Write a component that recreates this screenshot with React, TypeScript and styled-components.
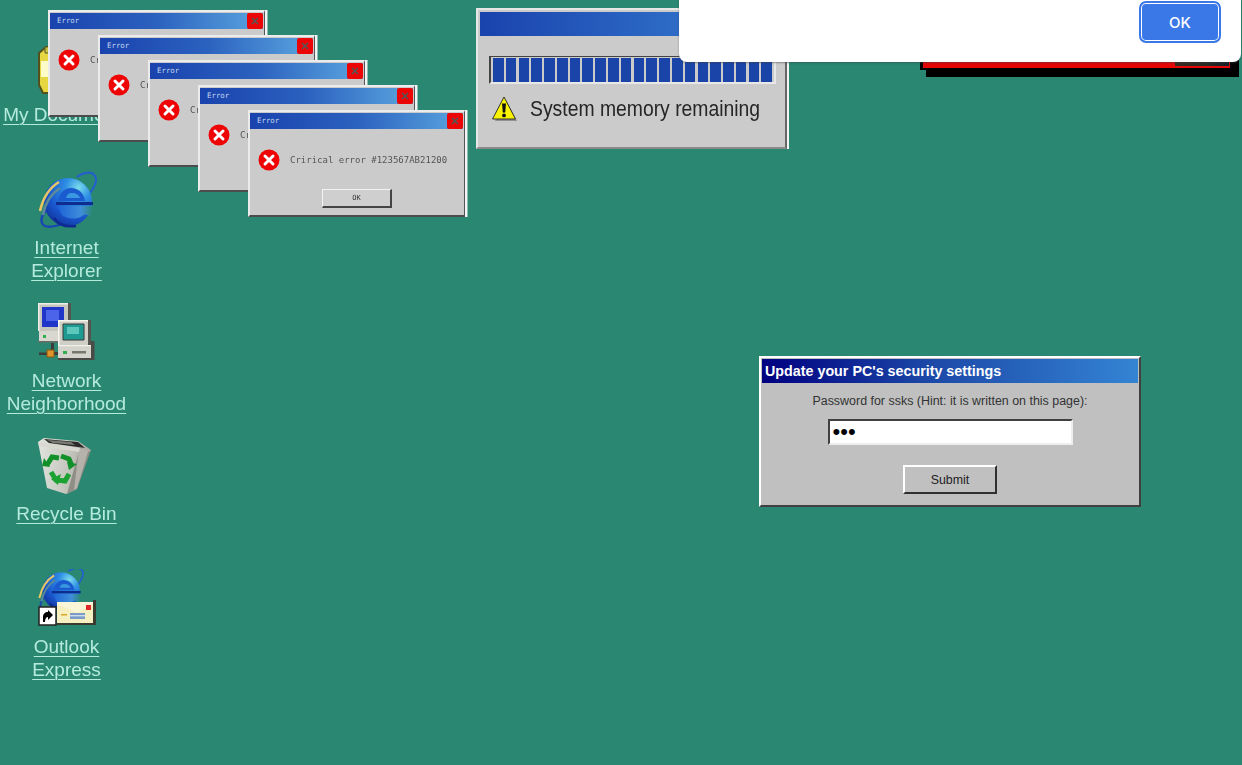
import React from "react";
import styled, { createGlobalStyle } from "styled-components";

const Global = createGlobalStyle`
  html, body { margin: 0; padding: 0; height: 100%; overflow: hidden; background: #2a8772; }
  #root { height: 100%; }
  * { box-sizing: border-box; }
`;

const Desktop = styled.main`
  position: relative;
  width: 1242px;
  height: 765px;
  overflow: hidden;
  background: #2a8772;
  font-family: "Liberation Sans", Arial, sans-serif;
`;

/* ---------- desktop icons ---------- */
const IconColumn = styled.nav`
  display: flex;
  flex-direction: column;
  width: 133px;
  padding-top: 37px;
`;
const IconItem = styled.a`
  display: flex;
  flex-direction: column;
  align-items: center;
  height: 133px;
  color: #b4ebdd;
  text-decoration: none;
`;
const IconArt = styled.svg`
  width: 60px;
  height: 60px;
  flex: none;
  margin-bottom: 6px;
  filter: blur(0.7px);
`;
const IconLabel = styled.span`
  font-size: 19px;
  line-height: 23px;
  text-align: center;
  white-space: pre-line;
  text-decoration: underline;
  text-decoration-thickness: 1px;
  text-underline-offset: 3px;
  filter: blur(0.45px);
`;

const IEGlobe = () => (
  <>
    <defs>
      <radialGradient id="ieg" cx="0.72" cy="0.2" r="0.95">
        <stop offset="0" stopColor="#7adcec" />
        <stop offset="0.28" stopColor="#2f8fe4" />
        <stop offset="0.65" stopColor="#1a58cf" />
        <stop offset="1" stopColor="#0f2c94" />
      </radialGradient>
      <linearGradient id="ien" x1="0" y1="0" x2="1" y2="0">
        <stop offset="0" stopColor="#1f66d8" />
        <stop offset="0.65" stopColor="#3f8ed8" />
        <stop offset="1" stopColor="#2a8772" />
      </linearGradient>
    </defs>
    <path d="M40 7c6-5 15-6 18-1 3 4-1 12-5 17" fill="none" stroke="#2460cc" strokeWidth="2.2" />
    <path d="M12 38C4 44 2 53 8 56c5 2 12 0 20-3" fill="none" stroke="#1a46b4" strokeWidth="2.4" />
    <circle cx="31" cy="32" r="24" fill="url(#ieg)" />
    <path d="M22 36h34c0 4-1 7-3 10-3-2-6-2-8 0-6 4-15 3-20-1-2-3-3-6-3-9z" fill="url(#ien)" />
    <path d="M21 31c1-8 7-13 13-13 7 0 13 5 14 13z" fill="#1a5cd0" />
    <path d="M29 28c1-4 3-5 6-5 4 0 7 2 8 5z" fill="#3a98e0" />
    <path d="M19 32h37v3H19z" fill="#0d2c8e" />
    <path d="M3 41C6 28 12 18 22 12" fill="none" stroke="#e8c666" strokeWidth="2.6" />
    <path d="M6 45C8 33 14 24 23 18" fill="none" stroke="#5a8a9a" strokeWidth="2.6" />
    <path d="M17 48c4 7 13 9 22 8" fill="none" stroke="#0e2a90" strokeWidth="2.6" />
  </>
);

const InternetExplorerIcon = () => (
  <IconArt viewBox="0 0 60 60"><IEGlobe /></IconArt>
);

const DocumentsIcon = () => (
  <IconArt viewBox="0 0 60 60">
    <path d="M2 16l7-6h16v46H6L2 48z" fill="#e6d642" stroke="#54501c" strokeWidth="2" />
    <path d="M4 24h20v16H4z" fill="#fdfcc8" />
    <path d="M8 10h14v6H8z" fill="#c8c040" stroke="#5a5a20" />
  </IconArt>
);

const NetworkIcon = () => (
  <IconArt viewBox="0 0 60 60">
    <path d="M1 0h33v28H1z" fill="#c6c6be" />
    <path d="M1 0h33v1.5H2.5V28H1z" fill="#eeeee6" />
    <path d="M31 0h3v28h-3z" fill="#55554f" />
    <path d="M5 4h22v20H5z" fill="#2036c8" />
    <path d="M9 7h13v11H9z" fill="#4c64ea" />
    <path d="M2 28h24v11H2z" fill="#d8d8d0" />
    <path d="M1 38h25v1.5H1z" fill="#6a6a66" />
    <path d="M6 32h3v3H6z" fill="#2fae4e" />
    <path d="M14 40h3v9h8v3H2v-2.5h12z" fill="#3c3c3a" />
    <path d="M10 47h7v7h-7z" fill="#e0952a" stroke="#8a5510" />
    <path d="M21 17h32v25H21z" fill="#cfcfc7" />
    <path d="M21 17h32v1.5H22.5V42H21z" fill="#f6f6ee" />
    <path d="M51 17h3v25h-3z" fill="#55554f" />
    <path d="M26 21h21v16H26z" fill="#1e9a92" stroke="#3a3a38" />
    <path d="M30 24h12v7H30z" fill="#5cc8bc" />
    <path d="M21 42h36v13H21z" fill="#d4d4cc" />
    <path d="M21 42h33v1.2H21z" fill="#f0f0e8" />
    <path d="M54 38h3.5v19H21v-2h33z" fill="#4a4a46" />
    <path d="M26 48h4v3h-4z" fill="#2fae4e" />
    <path d="M35 48h14v2.5H35z" fill="#77776f" />
  </IconArt>
);

const RecycleIcon = () => (
  <IconArt viewBox="0 0 60 60">
    <defs>
      <linearGradient id="rcb" x1="0" y1="0" x2="1" y2="0.15">
        <stop offset="0" stopColor="#e2e6de" />
        <stop offset="0.6" stopColor="#c6c8c0" />
        <stop offset="1" stopColor="#a6a69e" />
      </linearGradient>
    </defs>
    <path d="M1 6l6-4 34 3 13 9-3 2-11 37-11 5-19-6z" fill="url(#rcb)" />
    <path d="M43 12l11 2-14 39-10 5z" fill="#8e8d86" />
    <path d="M42 12l12 2-3 2-11 36-3 2z" fill="#b4b2aa" />
    <path d="M7 3l34 3 7 6-36-5z" fill="#2a2a28" />
    <path d="M10 4l24 2 4 3-22-2z" fill="#7a7a74" />
    <path d="M1 6l42 6-1 4L2 10z" fill="#d8d8d0" />
    <path d="M10 29l5-8 7 1" fill="none" stroke="#12902a" strokeWidth="5" />
    <path d="M7 22l6 9-8-1z" fill="#12902a" />
    <path d="M24 20l8 3 3 7" fill="none" stroke="#12902a" strokeWidth="5" />
    <path d="M40 28l-8 6-2-8z" fill="#12902a" />
    <path d="M32 38l-4 7-9-1-5-8" fill="none" stroke="#1ca232" strokeWidth="5" />
    <path d="M24 38l-3 11-7-6z" fill="#1ca232" />
  </IconArt>
);

const OutlookIcon = () => (
  <IconArt viewBox="0 0 60 60">
    <g transform="translate(0 -3) scale(0.78)"><IEGlobe /></g>
    <path d="M20 33h37v21H20z" fill="#f6efc0" />
    <path d="M20 33h37v1L40 44 20 35z" fill="#fbf6d8" />
    <path d="M56 31h3v25H20v-2h36z" fill="#3a3a30" />
    <path d="M49 36h5v5h-5z" fill="#e02a2a" />
    <path d="M33 44h15v6H33z" fill="#7c9cc8" />
    <path d="M33 46h15v1.4H33z" fill="#d0dce8" />
    <path d="M24 45h6v1.5h-6z" fill="#d8a828" />
    <path d="M2 38h17v18H2z" fill="#fff" stroke="#222" strokeWidth="1.5" />
    <path d="M6 53v-5c0-3 2-5 5-5v-2l5 5-5 5v-3c-2 0-3 2-3 5z" fill="#000" />
  </IconArt>
);

/* ---------- retro window helpers ---------- */
const RETRO_TITLE = "linear-gradient(90deg, #1a43ad 0%, #2b61bf 50%, #5aa5df 100%)";

const ErrorWindow = styled.section<{ $step: number }>`
  position: absolute;
  left: ${(p) => 48 + p.$step * 50}px;
  top: ${(p) => 10 + p.$step * 25}px;
  width: 217px;
  height: 107px;
  background: #cbcbcb;
  border-top: 2px solid #ececec;
  border-left: 2px solid #ececec;
  border-right: 1px solid #555;
  border-bottom: 2px solid #4c4c4c;
  padding: 1px 0 0 0;
  box-shadow: 2.5px 0 0 #f4f4f4;
  display: flex;
  flex-direction: column;
  filter: blur(0.45px);
`;
const ErrorTitleBar = styled.header`
  display: flex;
  align-items: center;
  justify-content: space-between;
  height: 16px;
  flex: none;
  margin-right: 1px;
  background: ${RETRO_TITLE};
`;
const ErrorTitle = styled.h2`
  margin: 0 0 0 7px;
  font: 400 7.4px/16px "DejaVu Sans Mono", monospace;
  color: #c6d8f0;
`;
const CloseButton = styled.button`
  width: 16px;
  height: 16px;
  padding: 0;
  border: 0;
  border-radius: 2px;
  background: #ec0505;
  display: flex;
  align-items: center;
  justify-content: center;
`;
const ErrorBody = styled.div`
  display: flex;
  align-items: center;
  gap: 10px;
  padding: 20px 0 0 8px;
`;
const ErrorText = styled.p`
  margin: 0;
  font: 400 9px/21px "DejaVu Sans Mono", monospace;
  color: #555;
  white-space: nowrap;
`;
const ErrorOk = styled.button`
  align-self: center;
  width: 70px;
  height: 19px;
  margin-top: 18px;
  padding: 0;
  background: #cfcfcf;
  border: 1px solid #f2f2f2;
  border-right: 2px solid #444;
  border-bottom: 2px solid #444;
  font: 400 7px/14px "DejaVu Sans Mono", monospace;
  color: #333;
`;
const ErrorIconArt = styled.svg`
  width: 22px;
  height: 22px;
  flex: none;
`;

const ErrorIcon = () => (
  <ErrorIconArt viewBox="0 0 22 22">
    <circle cx="11" cy="11" r="10.5" fill="#ee0404" />
    <path d="M7 7l8 8M15 7l-8 8" stroke="#fff" strokeWidth="3" strokeLinecap="round" />
  </ErrorIconArt>
);

const errorSteps = [0, 1, 2, 3, 4];

/* ---------- memory window ---------- */
const MemoryWindow = styled.section`
  position: absolute;
  left: 476px;
  top: 8px;
  width: 311px;
  height: 141px;
  padding: 2px 0 0 2px;
  background: #cbcbcb;
  border-top: 2px solid #e6e6e6;
  border-left: 2px solid #e6e6e6;
  border-right: 2px solid #666;
  border-bottom: 2px solid #8a8a8a;
  box-shadow: 2px 0 0 #f4f4f4;
  filter: blur(0.45px);
`;
const MemoryTitle = styled.header`
  height: 24px;
  background: linear-gradient(90deg, #1a43ad 0%, #2f6fc8 70%, #5aa5df 100%);
`;
const ProgressTrack = styled.div`
  display: flex;
  justify-content: space-between;
  width: 287px;
  height: 28px;
  margin: 20px 0 0 9px;
  padding: 1px 2px 0 2px;
  border-top: 1px solid #444;
  border-left: 2px solid #444;
  border-bottom: 2px solid #e8e8e8;
  border-right: 2px solid #e8e8e8;
  background: #cbcbcb;
`;
const ProgressBlock = styled.span`
  width: 10.6px;
  height: 24px;
  background: #1a44a8;
`;
const MemoryStatus = styled.div`
  display: flex;
  align-items: center;
  gap: 12px;
  margin: 12px 0 0 12px;
`;
const WarningArt = styled.svg`
  width: 26px;
  height: 26px;
  flex: none;
`;
const MemoryText = styled.p`
  margin: 0;
  font-size: 22.5px;
  line-height: 26px;
  color: #262626;
  white-space: nowrap;
  transform: scaleX(0.86);
  transform-origin: left center;
`;

const WarningIcon = () => (
  <WarningArt viewBox="0 0 26 26">
    <path d="M14 4l11 21H3z" fill="#777" opacity=".7" />
    <path d="M12 1L23.5 23H.5z" fill="#f9f200" stroke="#222" strokeWidth="0.9" strokeLinejoin="round" />
    <path d="M10 7.5h4l-.8 9h-2.4z" fill="#111" />
    <circle cx="12" cy="19.4" r="1.9" fill="#111" />
  </WarningArt>
);

/* ---------- red window behind the alert ---------- */
const RedWindow = styled.section`
  position: absolute;
  left: 920px;
  top: 40px;
  width: 313px;
  height: 30px;
  background: #000;
  box-shadow: 6px 7px 0 #000;
  padding: 0 3px 2px;
`;
const RedFrame = styled.div`
  display: flex;
  justify-content: flex-end;
  height: 100%;
  background: #e60606;
  padding: 0 1px 2px 0;
`;
const RedThumb = styled.div`
  width: 54px;
  background: linear-gradient(90deg, #3a2c20 0%, #2b2b24 55%, #14202a 100%);
`;

/* ---------- browser alert ---------- */
const AlertDialog = styled.aside`
  position: absolute;
  left: 679px;
  top: 0;
  width: 562px;
  height: 62px;
  display: flex;
  justify-content: flex-end;
  align-items: flex-end;
  padding: 0 20px 19px 0;
  background: #fff;
  border-radius: 0 0 8px 8px;
  box-shadow: 0 1px 2px rgba(60, 64, 67, 0.5);
`;
const AlertOk = styled.button`
  width: 82px;
  height: 42px;
  padding: 0;
  border: 2px solid #3b78e7;
  border-radius: 7px;
  background: #3b78e7;
  box-shadow: inset 0 0 0 1px #fff;
  background-clip: padding-box;
  color: #fff;
  font: 500 15px/1 Inter, "Liberation Sans", sans-serif;
`;

/* ---------- security window ---------- */
const SecurityWindow = styled.form`
  position: absolute;
  left: 759px;
  top: 356px;
  width: 382px;
  height: 151px;
  padding: 1px 1px 0 1px;
  background: #c0c0c0;
  border-top: 2px solid #fff;
  border-left: 2px solid #fff;
  border-right: 2px solid #404040;
  border-bottom: 2px solid #404040;
  display: flex;
  flex-direction: column;
  align-items: center;
`;
const SecurityTitle = styled.header`
  align-self: stretch;
  height: 24px;
  flex: none;
  padding-left: 3px;
  background: linear-gradient(90deg, #000080 0%, #1c49a8 45%, #3484d4 100%);
  color: #fff;
  font: 700 14.3px/24px "Liberation Sans", Arial, sans-serif;
  white-space: nowrap;
`;
const SecurityLabel = styled.label`
  margin-top: 10px;
  font-size: 12.45px;
  line-height: 16px;
  color: #333;
  white-space: nowrap;
`;
const PasswordInput = styled.input`
  width: 245px;
  height: 26px;
  margin-top: 10px;
  padding: 0 3px;
  background: #fff;
  color: #000;
  border: 0;
  border-top: 2px solid #404040;
  border-left: 2px solid #404040;
  border-right: 2px solid #eee;
  border-bottom: 2px solid #eee;
  font: 400 22px "Liberation Sans", sans-serif;
  outline: none;
`;
const SubmitButton = styled.button`
  width: 94px;
  height: 29px;
  margin-top: 20px;
  padding: 0;
  background: #c0c0c0;
  border-top: 2px solid #fff;
  border-left: 2px solid #fff;
  border-right: 2px solid #303030;
  border-bottom: 2px solid #303030;
  font: 400 12.4px "Liberation Sans", sans-serif;
  color: #222;
`;

const blocks = Array.from({ length: 22 }, (_, i) => i);

export default function App() {
  return (
    <Desktop>
      <Global />
      <IconColumn>
        <IconItem href="#"><DocumentsIcon /><IconLabel>My Documents</IconLabel></IconItem>
        <IconItem href="#"><InternetExplorerIcon /><IconLabel>{"Internet\nExplorer"}</IconLabel></IconItem>
        <IconItem href="#"><NetworkIcon /><IconLabel>{"Network\nNeighborhood"}</IconLabel></IconItem>
        <IconItem href="#"><RecycleIcon /><IconLabel>Recycle Bin</IconLabel></IconItem>
        <IconItem href="#"><OutlookIcon /><IconLabel>{"Outlook\nExpress"}</IconLabel></IconItem>
      </IconColumn>

      {errorSteps.map((s) => (
        <ErrorWindow key={s} $step={s}>
          <ErrorTitleBar>
            <ErrorTitle>Error</ErrorTitle>
            <CloseButton type="button" aria-label="Close">
              <svg width="8" height="8" viewBox="0 0 8 8">
                <path d="M1 1l6 6M7 1L1 7" stroke="#555" strokeWidth="1.6" />
              </svg>
            </CloseButton>
          </ErrorTitleBar>
          <ErrorBody>
            <ErrorIcon />
            <ErrorText>Crirical error #123567AB21200</ErrorText>
          </ErrorBody>
          <ErrorOk type="button">OK</ErrorOk>
        </ErrorWindow>
      ))}

      <MemoryWindow>
        <MemoryTitle />
        <ProgressTrack>
          {blocks.map((b) => <ProgressBlock key={b} />)}
        </ProgressTrack>
        <MemoryStatus>
          <WarningIcon />
          <MemoryText>System memory remaining</MemoryText>
        </MemoryStatus>
      </MemoryWindow>

      <RedWindow>
        <RedFrame><RedThumb /></RedFrame>
      </RedWindow>

      <AlertDialog>
        <AlertOk type="button">OK</AlertOk>
      </AlertDialog>

      <SecurityWindow onSubmit={(e) => e.preventDefault()}>
        <SecurityTitle>Update your PC's security settings</SecurityTitle>
        <SecurityLabel htmlFor="pw">Password for ssks (Hint: it is written on this page):</SecurityLabel>
        <PasswordInput id="pw" type="password" defaultValue="abc" />
        <SubmitButton type="submit">Submit</SubmitButton>
      </SecurityWindow>
    </Desktop>
  );
}
